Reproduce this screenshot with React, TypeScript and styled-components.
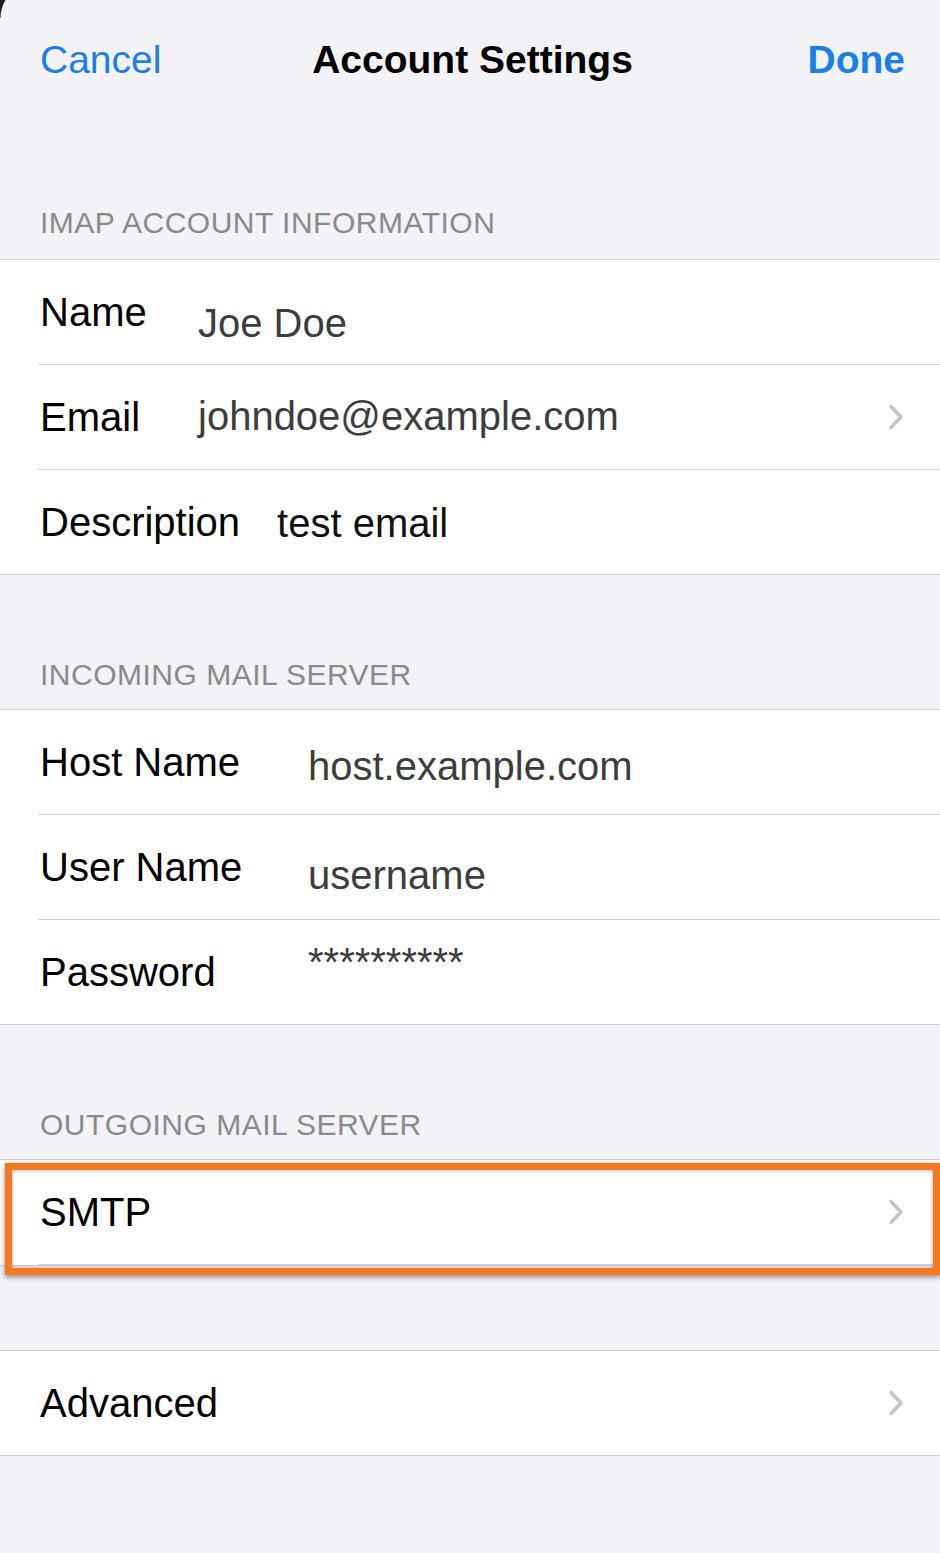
import React from 'react';
import styled, { createGlobalStyle } from 'styled-components';

const GlobalStyle = createGlobalStyle`
    html, body {
        margin: 0;
        padding: 0;
        background: #f2f2f7;
    }
    body {
        font-family: 'Liberation Sans', Arial, sans-serif;
        -webkit-font-smoothing: antialiased;
    }
`;

interface Field {
    label: string;
    value?: string;
    shift?: number;
    muted?: boolean;
    chevron?: boolean;
}

const imapFields: Field[] = [
    { label: 'Name', value: 'Joe Doe', shift: 11, muted: true },
    { label: 'Email', value: 'johndoe@example.com', shift: -1, muted: true, chevron: true },
    { label: 'Description', value: 'test email', shift: 1 },
];

const incomingFields: Field[] = [
    { label: 'Host Name', value: 'host.example.com', shift: 4, muted: true },
    { label: 'User Name', value: 'username', shift: 8, muted: true },
    { label: 'Password', value: '**********', shift: -10, muted: true },
];

const Chevron = () => (
    <ChevronIcon width='16' height='28' viewBox='0 0 16 28'>
        <path d='M3 3.5 L13 14 L3 24.5' />
    </ChevronIcon>
);

const FieldRow = ({ field, labelWidth }: { field: Field; labelWidth: number }) => (
    <Row>
        <RowBody>
            <Label $width={labelWidth}>{field.label}</Label>
            {field.value && (
                <Value $shift={field.shift ?? 0} $muted={!!field.muted}>
                    {field.value}
                </Value>
            )}
            {field.chevron && <Chevron />}
        </RowBody>
    </Row>
);

export default function App() {
    return (
        <Page>
            <GlobalStyle />
            <NavBar>
                <NavButton>Cancel</NavButton>
                <NavTitle>Account Settings</NavTitle>
                <NavButton $bold $right>
                    Done
                </NavButton>
            </NavBar>

            <SectionHeader $top={90} $bottom={21}>IMAP ACCOUNT INFORMATION</SectionHeader>
            <Group>
                {imapFields.map((f) => (
                    <FieldRow key={f.label} field={f} labelWidth={121} />
                ))}
            </Group>

            <SectionHeader $top={85} $bottom={19}>INCOMING MAIL SERVER</SectionHeader>
            <Group>
                {incomingFields.map((f) => (
                    <FieldRow key={f.label} field={f} labelWidth={231} />
                ))}
            </Group>

            <SectionHeader $top={85} $bottom={19}>OUTGOING MAIL SERVER</SectionHeader>
            <Group>
                <FieldRow field={{ label: 'SMTP', chevron: true }} labelWidth={0} />
                <Highlight />
            </Group>

            <Spacer />
            <Group>
                <FieldRow field={{ label: 'Advanced', chevron: true }} labelWidth={0} />
            </Group>
        </Page>
    );
}

const Page = styled.div`
    position: relative;
    width: 940px;
    min-height: 1553px;
    background: #f2f2f7;
    overflow: hidden;

    /* bit of the device corner showing in the screenshot */
    &::before {
        content: '';
        position: absolute;
        top: 0;
        left: 0;
        width: 30px;
        height: 18px;
        background: radial-gradient(circle 35px at 35px 18px, transparent 97%, #1d1d1f 100%);
        pointer-events: none;
    }
`;

const NavBar = styled.div`
    display: grid;
    grid-template-columns: 1fr auto 1fr;
    align-items: center;
    height: 118px;
    padding: 0 35px 0 40px;
    font-size: 39px;
    line-height: 1;
`;

const NavButton = styled.div<{ $bold?: boolean; $right?: boolean }>`
    color: #1b7fe9;
    font-weight: ${({ $bold }) => ($bold ? 700 : 400)};
    justify-self: ${({ $right }) => ($right ? 'end' : 'start')};
`;

const NavTitle = styled.div`
    color: #000;
    font-weight: 700;
`;

const SectionHeader = styled.div<{ $top: number; $bottom: number }>`
    padding: ${({ $top, $bottom }) => `${$top}px 40px ${$bottom}px`};
    font-size: 30px;
    line-height: 30px;
    letter-spacing: 0.5px;
    color: #8a8a8e;
`;

const Group = styled.div`
    position: relative;
    background: #fff;
    border-top: 1px solid #cfcfd3;
    border-bottom: 1px solid #cfcfd3;
`;

const Row = styled.div`
    display: flex;
    padding-left: 38px;

    &:not(:last-of-type) > div {
        border-bottom: 1px solid #d6d6da;
    }
`;

const RowBody = styled.div`
    flex: 1;
    display: flex;
    align-items: center;
    height: 104px;
    padding: 0 36px 0 2px;
    font-size: 40px;
    line-height: 1;
`;

const Label = styled.div<{ $width: number }>`
    flex: 0 0 auto;
    min-width: ${({ $width }) => $width}px;
    margin-right: 37px;
    color: #000;
`;

const Value = styled.div<{ $shift: number; $muted: boolean }>`
    flex: 1;
    color: ${({ $muted }) => ($muted ? '#3d3d40' : '#111')};
    transform: translateY(${({ $shift }) => $shift}px);
    white-space: nowrap;
`;

const ChevronIcon = styled.svg`
    flex: 0 0 auto;
    margin-left: auto;
    fill: none;
    stroke: #c6c6c9;
    stroke-width: 3.6;
    stroke-linecap: round;
    stroke-linejoin: round;
`;

const Highlight = styled.div`
    position: absolute;
    top: 3px;
    left: 5px;
    right: 0;
    bottom: -10px;
    border: 7px solid #f47820;
    box-shadow: 0 2px 5px rgba(0, 0, 0, 0.45), inset 0 0 4px rgba(0, 0, 0, 0.35);
    pointer-events: none;
`;

const Spacer = styled.div`
    height: 84px;
`;
